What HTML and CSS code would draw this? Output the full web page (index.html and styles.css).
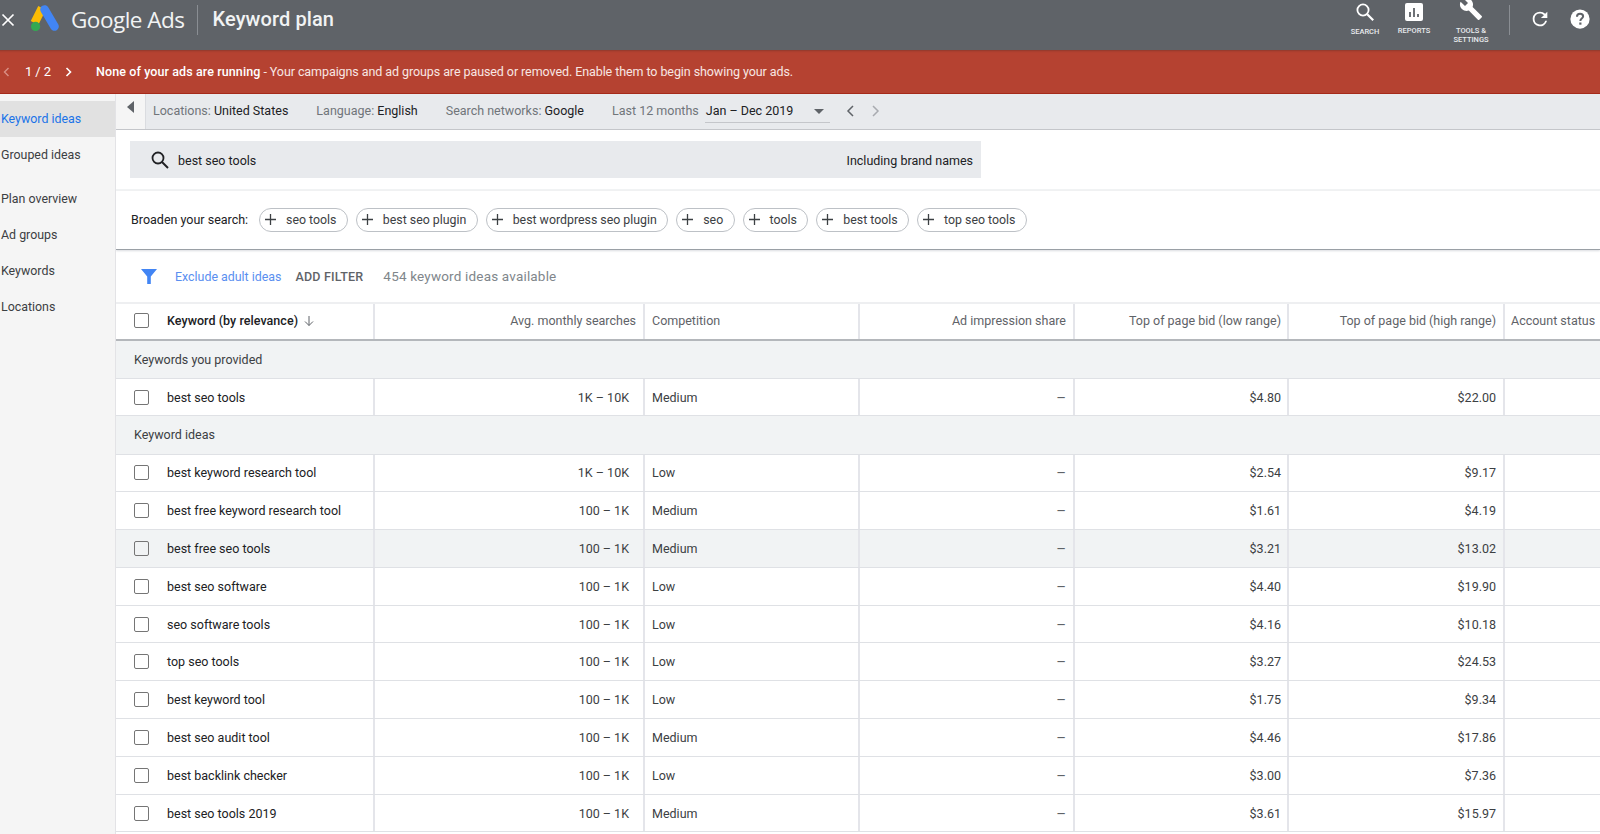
FILE: index.html
```html
<!DOCTYPE html>
<html lang="en">
<head>
<meta charset="utf-8">
<title>Keyword plan</title>
<link rel="stylesheet" href="styles.css">
</head>
<body>
<header class="topbar">
  <svg class="ic-close" width="14" height="14" viewBox="0 0 14 14"><path d="M1.5 1.5l11 11M12.5 1.5l-11 11" stroke="#fff" stroke-width="1.7" fill="none"/></svg>
  <svg class="logo" width="30" height="28" viewBox="0 0 30 28">
    <path d="M12 4L4.500 19" stroke="#fbbc04" stroke-width="8.4" stroke-linecap="butt" fill="none"/>
    <path d="M14.500 5.500l10 17" stroke="#4285f4" stroke-width="8.6" stroke-linecap="round" fill="none"/>
    <circle cx="5.600" cy="22.400" r="4.600" fill="#34a853"/>
  </svg>
  <span class="brand">Google Ads</span>
  <span class="vrule"></span>
  <span class="page-title">Keyword plan</span>
  <nav class="top-actions">
    <div class="act act-search">
      <svg width="20" height="20" viewBox="0 0 20 20"><circle cx="8" cy="8" r="5.600" stroke="#fff" stroke-width="1.800" fill="none"/><path d="M12.200 12.200l6 6" stroke="#fff" stroke-width="2.200"/></svg>
      <span>SEARCH</span>
    </div>
    <div class="act act-reports">
      <svg width="18" height="18" viewBox="0 0 18 18"><rect width="18" height="18" rx="2" fill="#fff"/><path d="M5 9v5M9 5v9M13 11v3" stroke="#5f6368" stroke-width="1.800"/></svg>
      <span>REPORTS</span>
    </div>
    <div class="act act-tools">
      <svg width="24" height="24" viewBox="0 0 24 24"><path d="M22.700 19l-9.100-9.100c.9-2.300.4-5-1.500-6.900-2-2-5-2.400-7.400-1.300L9 6 6 9 1.600 4.700C.4 7.100.9 10.100 2.900 12.100c1.900 1.900 4.600 2.400 6.900 1.500l9.100 9.100c.4.400 1 .4 1.400 0l2.300-2.300c.5-.4.5-1.100.1-1.400z" fill="#fff"/></svg>
      <span>TOOLS &amp;<br>SETTINGS</span>
    </div>
    <span class="vrule vrule-right"></span>
    <svg class="ic-refresh" width="22" height="22" viewBox="0 0 24 24"><path d="M17.650 6.350A7.960 7.960 0 0 0 12 4a8 8 0 1 0 7.730 10h-2.080A6 6 0 1 1 12 6c1.660 0 3.140.69 4.220 1.780L13 11h7V4l-2.350 2.350z" fill="#fff"/></svg>
    <svg class="ic-help" width="22" height="22" viewBox="0 0 24 24"><circle cx="12" cy="12" r="10.500" fill="#fff"/><path d="M8.700 9.500c0-2 1.500-3.300 3.400-3.300s3.300 1.200 3.300 2.900c0 2.400-3 2.500-3 5" stroke="#5f6368" stroke-width="2.200" fill="none"/><rect x="11.200" y="15.800" width="2.400" height="2.400" fill="#5f6368"/></svg>
  </nav>
</header>

<section class="banner">
  <svg class="chev-prev" width="7" height="10" viewBox="0 0 7 10"><path d="M5.500 1L1.500 5l4 4" stroke="#d98f85" stroke-width="1.400" fill="none"/></svg>
  <span class="pager">1 / 2</span>
  <svg class="chev-next" width="7" height="10" viewBox="0 0 7 10"><path d="M1.500 1l4 4-4 4" stroke="#fff" stroke-width="1.600" fill="none"/></svg>
  <p class="banner-msg"><strong>None of your ads are running</strong> - Your campaigns and ad groups are paused or removed. Enable them to begin showing your ads.</p>
</section>

<div class="layout">
  <aside class="sidenav">
    <a class="nav-item nav-active">Keyword ideas</a>
    <a class="nav-item nav-gap">Grouped ideas</a>
    <a class="nav-item">Plan overview</a>
    <a class="nav-item">Ad groups</a>
    <a class="nav-item">Keywords</a>
    <a class="nav-item">Locations</a>
  </aside>

  <main class="content">
    <div class="toolbar">
      <button class="collapse"><svg width="8" height="12" viewBox="0 0 8 12"><path d="M7 0v12L0 6z" fill="#5f6368"/></svg></button>
      <span class="tb-item tb-loc"><em>Locations:</em> United States</span>
      <span class="tb-item tb-lang"><em>Language:</em> English</span>
      <span class="tb-item tb-net"><em>Search networks:</em> Google</span>
      <span class="tb-item tb-last"><em>Last 12 months</em></span>
      <span class="date-select">Jan – Dec 2019<i class="caret"></i></span>
      <svg class="tb-chev-l" width="9" height="12" viewBox="0 0 9 12"><path d="M7 1L2 6l5 5" stroke="#5f6368" stroke-width="1.500" fill="none"/></svg>
      <svg class="tb-chev-r" width="9" height="12" viewBox="0 0 9 12"><path d="M2 1l5 5-5 5" stroke="#a8abb0" stroke-width="1.500" fill="none"/></svg>
    </div>

    <div class="search-sec">
      <div class="search-field">
        <svg width="20" height="20" viewBox="0 0 20 20"><circle cx="8" cy="8" r="5.500" stroke="#202124" stroke-width="1.800" fill="none"/><path d="M12 12l6 6" stroke="#202124" stroke-width="2"/></svg>
        <span class="search-q">best seo tools</span>
        <span class="search-brand">Including brand names</span>
      </div>
    </div>

    <div class="broaden">
      <span class="broaden-label">Broaden your search:</span>
      <span class="chip"><svg class="chip-plus" viewBox="0 0 11 11"><path d="M5.500 0v11M0 5.500h11" stroke="#3c4043" stroke-width="1.300"/></svg>seo tools</span>
      <span class="chip"><svg class="chip-plus" viewBox="0 0 11 11"><path d="M5.500 0v11M0 5.500h11" stroke="#3c4043" stroke-width="1.300"/></svg>best seo plugin</span>
      <span class="chip"><svg class="chip-plus" viewBox="0 0 11 11"><path d="M5.500 0v11M0 5.500h11" stroke="#3c4043" stroke-width="1.300"/></svg>best wordpress seo plugin</span>
      <span class="chip"><svg class="chip-plus" viewBox="0 0 11 11"><path d="M5.500 0v11M0 5.500h11" stroke="#3c4043" stroke-width="1.300"/></svg>seo</span>
      <span class="chip"><svg class="chip-plus" viewBox="0 0 11 11"><path d="M5.500 0v11M0 5.500h11" stroke="#3c4043" stroke-width="1.300"/></svg>tools</span>
      <span class="chip"><svg class="chip-plus" viewBox="0 0 11 11"><path d="M5.500 0v11M0 5.500h11" stroke="#3c4043" stroke-width="1.300"/></svg>best tools</span>
      <span class="chip"><svg class="chip-plus" viewBox="0 0 11 11"><path d="M5.500 0v11M0 5.500h11" stroke="#3c4043" stroke-width="1.300"/></svg>top seo tools</span>
    </div>

    <div class="filters">
      <svg width="16" height="16" viewBox="0 0 16 16"><path d="M0 1h16L9.800 8.500V16H6.200V8.500z" fill="#4285f4"/></svg>
      <a class="f-link">Exclude adult ideas</a>
      <span class="f-add">ADD FILTER</span>
      <span class="f-count">454 keyword ideas available</span>
    </div>

    <div class="grid-head row">
      <div class="cell kw"><i class="check"></i><b>Keyword (by relevance)</b><svg class="sort" width="10" height="12" viewBox="0 0 10 12"><path d="M5 1v9.500M1 6.500l4 4 4-4" stroke="#5f6368" fill="none"/></svg></div>
      <div class="cell num">Avg. monthly searches</div>
      <div class="cell">Competition</div>
      <div class="cell num">Ad impression share</div>
      <div class="cell num">Top of page bid (low range)</div>
      <div class="cell num">Top of page bid (high range)</div>
      <div class="cell last">Account status</div>
    </div>

    <div class="group group-a">Keywords you provided</div>
    <div class="row body-row row-a">
      <div class="cell kw"><i class="check"></i>best seo tools</div><div class="cell num wide">1K – 10K</div><div class="cell">Medium</div><div class="cell num dash">–</div><div class="cell num">$4.80</div><div class="cell num">$22.00</div><div class="cell last"></div>
    </div>
    <div class="group group-b">Keyword ideas</div>

    <div class="rows">
      <div class="row body-row"><div class="cell kw"><i class="check"></i>best keyword research tool</div><div class="cell num wide">1K – 10K</div><div class="cell">Low</div><div class="cell num dash">–</div><div class="cell num">$2.54</div><div class="cell num">$9.17</div><div class="cell last"></div></div>
      <div class="row body-row"><div class="cell kw"><i class="check"></i>best free keyword research tool</div><div class="cell num wide">100 – 1K</div><div class="cell">Medium</div><div class="cell num dash">–</div><div class="cell num">$1.61</div><div class="cell num">$4.19</div><div class="cell last"></div></div>
      <div class="row body-row hover"><div class="cell kw"><i class="check"></i>best free seo tools</div><div class="cell num wide">100 – 1K</div><div class="cell">Medium</div><div class="cell num dash">–</div><div class="cell num">$3.21</div><div class="cell num">$13.02</div><div class="cell last"></div></div>
      <div class="row body-row"><div class="cell kw"><i class="check"></i>best seo software</div><div class="cell num wide">100 – 1K</div><div class="cell">Low</div><div class="cell num dash">–</div><div class="cell num">$4.40</div><div class="cell num">$19.90</div><div class="cell last"></div></div>
      <div class="row body-row"><div class="cell kw"><i class="check"></i>seo software tools</div><div class="cell num wide">100 – 1K</div><div class="cell">Low</div><div class="cell num dash">–</div><div class="cell num">$4.16</div><div class="cell num">$10.18</div><div class="cell last"></div></div>
      <div class="row body-row"><div class="cell kw"><i class="check"></i>top seo tools</div><div class="cell num wide">100 – 1K</div><div class="cell">Low</div><div class="cell num dash">–</div><div class="cell num">$3.27</div><div class="cell num">$24.53</div><div class="cell last"></div></div>
      <div class="row body-row"><div class="cell kw"><i class="check"></i>best keyword tool</div><div class="cell num wide">100 – 1K</div><div class="cell">Low</div><div class="cell num dash">–</div><div class="cell num">$1.75</div><div class="cell num">$9.34</div><div class="cell last"></div></div>
      <div class="row body-row"><div class="cell kw"><i class="check"></i>best seo audit tool</div><div class="cell num wide">100 – 1K</div><div class="cell">Medium</div><div class="cell num dash">–</div><div class="cell num">$4.46</div><div class="cell num">$17.86</div><div class="cell last"></div></div>
      <div class="row body-row"><div class="cell kw"><i class="check"></i>best backlink checker</div><div class="cell num wide">100 – 1K</div><div class="cell">Low</div><div class="cell num dash">–</div><div class="cell num">$3.00</div><div class="cell num">$7.36</div><div class="cell last"></div></div>
      <div class="row body-row"><div class="cell kw"><i class="check"></i>best seo tools 2019</div><div class="cell num wide">100 – 1K</div><div class="cell">Medium</div><div class="cell num dash">–</div><div class="cell num">$3.61</div><div class="cell num">$15.97</div><div class="cell last"></div></div>
    </div>
  </main>
</div>
</body>
</html>
```
FILE: styles.css
```css
* { box-sizing: border-box; }
html, body { margin: 0; height: 834px; overflow: hidden; }
body { font-family: Roboto, "Liberation Sans", sans-serif; font-size: 13px; color: #3c4043; background: #fff; }
em { font-style: normal; color: #70757a; }

.topbar { height: 50px; padding-bottom: 10px; background: #5f6368; display: flex; align-items: center; color: #fff; }
.ic-close { margin-left: 1px; }
.logo { margin-left: 15px; margin-top: -4px; }
.brand { font-family: "Open Sans", sans-serif; font-size: 22.500px; margin: -2px 0 0 11px; letter-spacing: -0.5px; color: #f1f3f4; }
.vrule { width: 1px; height: 30px; background: #8a8e93; margin: 0 15px 0 12px; }
.page-title { font-size: 20px; font-weight: 500; letter-spacing: 0.1px; color: #f1f3f4; margin-top: -2px; }
.top-actions { margin-left: auto; display: flex; align-self: flex-start; height: 50px; position: relative; width: 290px; }
.act { position: absolute; display: flex; flex-direction: column; align-items: center; font-size: 7.500px; font-weight: 500; line-height: 9px; text-align: center; color: #e8eaed; }
.act-search { left: 35px; top: 2px; gap: 5px; width: 40px; }
.act-reports { left: 84px; top: 3px; gap: 5px; width: 40px; }
.act-tools { left: 136px; top: -3px; gap: 5px; width: 50px; }
.vrule-right { position: absolute; left: 199px; top: 5px; margin: 0; }
.ic-refresh { position: absolute; left: 219px; top: 8px; }
.ic-help { position: absolute; left: 259px; top: 8px; }

.banner { height: 44px; background: #b54231; border-bottom: 1px solid #a52a1a; box-shadow: inset 0 3px 2px -2px #8e3a2c; display: flex; align-items: center; color: #fff; }
.chev-prev { margin-left: 3px; }
.pager { margin-left: 15px; font-size: 13px; width: 36px; letter-spacing: -0.1px; }
.chev-next { margin-left: 4px; }
.banner-msg { margin: 0 0 0 24px; font-size: 12.500px; letter-spacing: -0.08px; color: #f8e6e3; }
.banner-msg strong { font-weight: 500; color: #fff; letter-spacing: 0.1px; }

.layout { display: flex; height: 740px; }
.sidenav { width: 116px; flex: none; background: #f5f5f5; padding-top: 7px; border-right: 1px solid #e3e3e6; display: flex; flex-direction: column; }
.nav-item { height: 36px; line-height: 36px; padding-left: 1px; color: #3c4043; font-size: 12.400px; }
.nav-active { background: #e1e1e1; color: #1a73e8; }
.nav-gap { margin-bottom: 8px; }

.content { flex: 1; min-width: 0; overflow: hidden; }
.toolbar { height: 36px; padding-bottom: 2px; background: #e8eaed; border-bottom: 1px solid #c4c6ca; display: flex; align-items: center; color: #202124; font-size: 12.500px; }
.collapse { width: 30px; height: 35px; align-self: flex-start; background: #f5f5f5; border: 0; padding: 0 0 6px 0; border-right: 1px solid #dadce0; }
.tb-item { white-space: nowrap; }
.tb-loc { margin-left: 7px; }
.tb-lang { margin-left: 28px; }
.tb-net { margin-left: 28px; }
.tb-last { margin-left: 28px; }
.date-select { margin-left: 6px; width: 125px; height: 24px; line-height: 23px; border-bottom: 1px solid #c4c6ca; padding-left: 1px; position: relative; }
.caret { position: absolute; right: 6px; top: 10px; border: 5px solid transparent; border-top: 5px solid #5f6368; border-bottom: 0; }
.tb-chev-l { margin-left: 16px; }
.tb-chev-r { margin-left: 16px; }

.search-sec { height: 61px; padding: 11px 0 0 14px; border-bottom: 2px solid #f1f3f4; }
.search-field { width: 851px; height: 37px; background: #e8eaed; display: flex; align-items: center; padding: 1px 8px 0 20px; color: #202124; font-size: 12.500px; }
.search-q { margin-left: 8px; }
.search-brand { margin-left: auto; }

.broaden { height: 59px; padding: 1px 0 2px 15px; border-bottom: 1px solid #9aa0a6; box-shadow: 0 1px 2px #dadce0; display: flex; align-items: center; gap: 7.900px; font-size: 12.500px; color: #202124; position: relative; }
.broaden-label { margin-right: 3px; }
.chip { height: 24px; display: inline-flex; align-items: center; border: 1px solid #bdc1c6; border-radius: 12px; padding: 0 10.500px 0 5px; color: #3c4043; white-space: nowrap; font-size: 12.350px; }
.chip-plus { width: 11px; height: 11px; margin-right: 10px; flex: none; }

.filters { height: 52px; display: flex; align-items: center; padding-left: 25px; }
.f-link { margin-left: 18px; color: #5a8ff0; font-size: 12.400px; }
.f-add { margin-left: 14px; font-weight: 500; font-size: 12.500px; color: #5f6368; letter-spacing: 0.2px; }
.f-count { margin-left: 20px; font-size: 13.500px; color: #80868b; letter-spacing: 0.18px; }

.row { display: grid; grid-template-columns: 259px 270px 215px 215px 214px 216px 1fr; }
.cell { display: flex; align-items: center; border-right: 2px solid #e4e5ea; padding: 0 7px 0 7px; font-size: 12.500px; white-space: nowrap; color: #3c4043; min-width: 0; }
.cell:nth-child(5) { padding-right: 6px; }
.cell.last { border-right: 0; padding-left: 6px; }
.num { justify-content: flex-end; }
.num.wide { padding-right: 14px; }
.kw { padding-left: 18px; color: #202124; }
.check { width: 15px; height: 15px; border: 1.300px solid #757575; border-radius: 2px; margin-right: 18px; flex: none; background: #fff; }
.grid-head { height: 39px; border-top: 2px solid #eeeff1; border-bottom: 2px solid #b4b7bb; }
.grid-head .cell { color: #5f6368; padding-bottom: 2px; }
.grid-head b { color: #202124; font-weight: 500; letter-spacing: 0.05px; }
.sort { margin-left: 6px; }
.group { height: 38px; background: #f1f3f4; display: flex; align-items: center; padding-left: 18px; font-size: 12.500px; color: #3c4043; border-bottom: 1px solid #dfe1e5; }
.group-b { height: 38.500px; }
.body-row { height: 37.800px; border-bottom: 1px solid #dfe1e5; }
.row-a { height: 37px; }
.hover { background: #f1f3f4; }
.hover .check { background: transparent; }
.cell.dash { color: #5f6368; font-size: 15px; padding-top: 1px; }
```
